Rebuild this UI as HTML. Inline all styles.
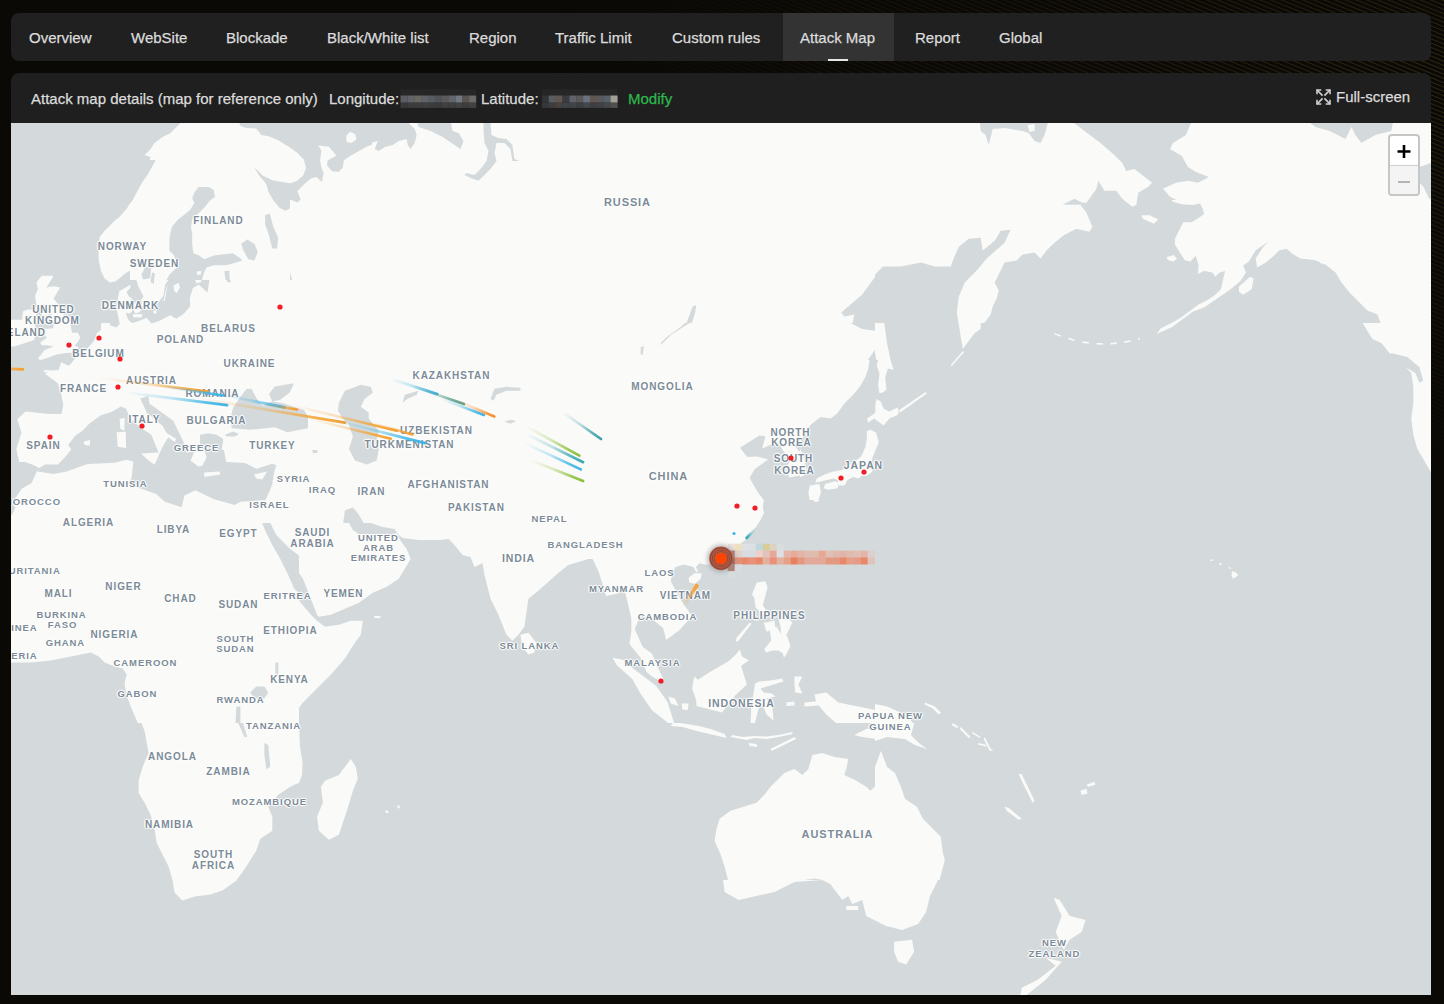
<!DOCTYPE html>
<html><head><meta charset="utf-8">
<style>
*{box-sizing:border-box;margin:0;padding:0}
html,body{width:1444px;height:1004px;overflow:hidden;background:#0b0906;font-family:"Liberation Sans",sans-serif}
#bg{position:absolute;left:0;top:0;width:1444px;height:1004px;background:#0b0906}
#stripes{position:absolute;left:0;top:0;width:1444px;height:1004px;background:repeating-linear-gradient(22deg,rgba(0,0,0,0) 0px,rgba(0,0,0,0) 2px,rgba(105,95,40,0.38) 3px,rgba(0,0,0,0) 4px);-webkit-mask-image:radial-gradient(ellipse 900px 420px at 1444px 75px,#000 0%,rgba(0,0,0,0.5) 40%,rgba(0,0,0,0) 100%);mask-image:radial-gradient(ellipse 900px 420px at 1444px 75px,#000 0%,rgba(0,0,0,0.5) 40%,rgba(0,0,0,0) 100%)}
.bar{position:absolute;left:11px;top:13px;width:1420px;height:48px;background:#202020;border-radius:8px}
.tab{position:absolute;top:29px;font-size:15px;color:#dcdcdc;white-space:nowrap;line-height:17px;-webkit-text-stroke:0.25px #dcdcdc}
.act{position:absolute;left:783px;top:13px;width:111px;height:48px;background:#333333}
.uline{position:absolute;left:828px;top:59px;width:20px;height:2px;background:#e6e6e6}
.panel{position:absolute;left:11px;top:73px;width:1420px;height:922px;background:#1f1f1f;border-radius:8px 8px 0 0;overflow:hidden}
.htxt{position:absolute;top:90px;font-size:15px;color:#dcdcdc;white-space:nowrap;line-height:17px;-webkit-text-stroke:0.25px currentColor}
#map{position:absolute;left:11px;top:123px;width:1420px;height:872px;background:#d4dadc;overflow:hidden}
#map svg{position:absolute;left:0;top:0}
.lb{position:absolute;transform:translate(-50%,-50%);font-weight:bold;color:#7c8b97;letter-spacing:0.9px;white-space:nowrap;line-height:1;
 text-shadow:0 0 2px #fff,0 0 2px #fff,1px 0 1px #fff,-1px 0 1px #fff,0 1px 1px #fff,0 -1px 1px #fff}
.zoom{position:absolute;left:1388px;top:134px;width:32px;height:62px;border:2px solid #c6c6c6;border-radius:4px;background:#fff;overflow:hidden}
.zoom .mi{position:absolute;left:0;top:29px;width:28px;height:29px;background:#f4f4f4;border-top:1px solid #cfcfcf}
</style></head><body>
<div id="bg"></div><div id="stripes"></div>
<div class="bar"></div>
<div class="act"></div>
<div class="uline"></div>
<div class="tab" style="left:29px">Overview</div>
<div class="tab" style="left:131px">WebSite</div>
<div class="tab" style="left:226px">Blockade</div>
<div class="tab" style="left:327px">Black/White list</div>
<div class="tab" style="left:469px">Region</div>
<div class="tab" style="left:555px">Traffic Limit</div>
<div class="tab" style="left:672px">Custom rules</div>
<div class="tab" style="left:800px">Attack Map</div>
<div class="tab" style="left:915px">Report</div>
<div class="tab" style="left:999px">Global</div>
<div class="panel"></div>
<div class="htxt" style="left:31px">Attack map details (map for reference only)</div>
<div class="htxt" style="left:329px">Longitude:</div>
<div class="htxt" style="left:481px">Latitude:</div>
<div class="htxt" style="left:628px;color:#2db84d">Modify</div>
<div class="htxt" style="left:1336px;top:88px">Full-screen</div>
<svg width="1444" height="123" style="position:absolute;left:0;top:0"><rect x="400.5" y="89.2" width="75.5" height="6.3" fill="#262626"/><rect x="400.5" y="95.5" width="7.1" height="7.2" fill="#5a5e62"/><rect x="407.4" y="95.5" width="7.1" height="7.2" fill="#606468"/><rect x="414.2" y="95.5" width="7.1" height="7.2" fill="#6a6660"/><rect x="421.1" y="95.5" width="7.1" height="7.2" fill="#5e6266"/><rect x="428.0" y="95.5" width="7.1" height="7.2" fill="#585c60"/><rect x="434.8" y="95.5" width="7.1" height="7.2" fill="#50545a"/><rect x="441.7" y="95.5" width="7.1" height="7.2" fill="#5a5a5a"/><rect x="448.5" y="95.5" width="7.1" height="7.2" fill="#62666a"/><rect x="455.4" y="95.5" width="7.1" height="7.2" fill="#707880"/><rect x="462.3" y="95.5" width="7.1" height="7.2" fill="#5a5450"/><rect x="469.1" y="95.5" width="7.1" height="7.2" fill="#6a6a6a"/><rect x="400.5" y="102.7" width="7.1" height="5.2" fill="#383838"/><rect x="407.4" y="102.7" width="7.1" height="5.2" fill="#3a3c3e"/><rect x="414.2" y="102.7" width="7.1" height="5.2" fill="#3c3c3c"/><rect x="421.1" y="102.7" width="7.1" height="5.2" fill="#403e3c"/><rect x="428.0" y="102.7" width="7.1" height="5.2" fill="#3c3c3c"/><rect x="434.8" y="102.7" width="7.1" height="5.2" fill="#383a3c"/><rect x="441.7" y="102.7" width="7.1" height="5.2" fill="#3e4042"/><rect x="448.5" y="102.7" width="7.1" height="5.2" fill="#3c3e40"/><rect x="455.4" y="102.7" width="7.1" height="5.2" fill="#404244"/><rect x="462.3" y="102.7" width="7.1" height="5.2" fill="#3e3c3a"/><rect x="469.1" y="102.7" width="7.1" height="5.2" fill="#424242"/><rect x="541.9" y="89.2" width="75.5" height="6.3" fill="#262626"/><rect x="541.9" y="95.5" width="7.1" height="7.2" fill="#303438"/><rect x="548.8" y="95.5" width="7.1" height="7.2" fill="#5a5c60"/><rect x="555.6" y="95.5" width="7.1" height="7.2" fill="#605850"/><rect x="562.5" y="95.5" width="7.1" height="7.2" fill="#383c40"/><rect x="569.4" y="95.5" width="7.1" height="7.2" fill="#62606a"/><rect x="576.2" y="95.5" width="7.1" height="7.2" fill="#5a5858"/><rect x="583.1" y="95.5" width="7.1" height="7.2" fill="#6a7080"/><rect x="589.9" y="95.5" width="7.1" height="7.2" fill="#605850"/><rect x="596.8" y="95.5" width="7.1" height="7.2" fill="#585a5c"/><rect x="603.7" y="95.5" width="7.1" height="7.2" fill="#58606a"/><rect x="610.5" y="95.5" width="7.1" height="7.2" fill="#a0a098"/><rect x="541.9" y="102.7" width="7.1" height="5.2" fill="#34383c"/><rect x="548.8" y="102.7" width="7.1" height="5.2" fill="#403c3a"/><rect x="555.6" y="102.7" width="7.1" height="5.2" fill="#48423e"/><rect x="562.5" y="102.7" width="7.1" height="5.2" fill="#3e4448"/><rect x="569.4" y="102.7" width="7.1" height="5.2" fill="#404448"/><rect x="576.2" y="102.7" width="7.1" height="5.2" fill="#3c4040"/><rect x="583.1" y="102.7" width="7.1" height="5.2" fill="#40484c"/><rect x="589.9" y="102.7" width="7.1" height="5.2" fill="#403e3c"/><rect x="596.8" y="102.7" width="7.1" height="5.2" fill="#3e4246"/><rect x="603.7" y="102.7" width="7.1" height="5.2" fill="#444848"/><rect x="610.5" y="102.7" width="7.1" height="5.2" fill="#50504e"/>
<g stroke="#d0d0d0" stroke-width="1.6" fill="none" stroke-linecap="square">
<path d="M1317.5,90.5 L1322,95"/><path d="M1317,90 h3.5 M1317,90 v3.5"/>
<path d="M1329.5,90.5 L1325,95"/><path d="M1330,90 h-3.5 M1330,90 v3.5"/>
<path d="M1317.5,103.5 L1322,99"/><path d="M1317,104 h3.5 M1317,104 v-3.5"/>
<path d="M1329.5,103.5 L1325,99"/><path d="M1330,104 h-3.5 M1330,104 v-3.5"/>
</g></svg>
<div id="map">
<svg width="1420" height="872" viewBox="0 0 1420 872"><path fill="#fafaf8" fill-rule="evenodd" d="M119.1,295.3 129.2,304.5 140.4,311.7 147.6,329.6 130.0,330.6 137.6,337.6 143.6,341.8 148.2,331.6 147.7,330.0 148.2,331.2 151.6,323.7 157.2,314.3 163.7,319.1 165.3,316.1 155.4,309.7 151.6,302.9 136.0,290.0 129.2,275.4 137.4,273.0 138.4,280.4 162.3,297.7 173.1,320.3 175.5,329.6 183.5,328.6 179.5,337.6 187.3,343.4 191.3,342.8 195.7,334.4 193.2,327.0 189.0,327.0 189.0,311.7 197.3,310.2 205.6,311.8 212.3,316.0 210.7,327.0 212.9,327.0 215.2,339.0 234.0,340.0 245.7,345.8 261.3,340.8 265.3,342.2 263.1,349.6 261.3,361.0 258.5,368.3 254.5,376.9 242.9,378.1 229.4,378.7 223.6,382.1 202.4,375.9 184.5,367.3 173.5,372.5 170.7,384.3 153.8,378.7 145.2,370.9 116.7,361.0 120.5,355.0 122.3,338.4 115.3,336.8 103.5,339.8 76.6,341.0 55.6,348.4 42.5,351.0 26.3,348.6 27.1,347.0 26.3,347.6 20.5,360.2 11.0,365.5 3.6,375.9 3.0,383.1 4.6,384.5 1.8,390.3 0.0,392.7 0.0,539.6 19.9,539.6 39.9,537.6 79.8,529.6 87.8,533.6 93.7,539.6 103.7,543.6 111.7,545.6 115.7,551.6 113.7,559.6 114.7,569.5 119.7,583.5 126.8,600.0 130.4,600.0 133.6,608.0 137.6,629.9 131.6,643.9 127.6,657.8 127.6,669.8 133.6,679.8 139.6,691.7 143.6,705.7 145.6,719.7 157.6,743.6 161.6,757.6 163.5,769.5 171.5,777.5 183.5,773.5 199.4,771.5 211.4,767.5 225.4,757.6 235.3,743.6 245.3,727.6 249.3,715.7 261.3,707.7 261.3,693.7 257.3,683.8 267.3,671.8 279.2,663.8 288.0,659.8 291.0,651.9 291.6,639.9 289.0,623.9 288.0,600.0 288.0,584.8 292.0,579.5 319.9,551.6 333.9,535.6 343.8,519.7 349.8,511.7 351.8,497.7 339.9,497.7 327.9,501.7 313.9,503.7 306.0,497.7 300.0,491.7 288.0,477.8 288.0,470.0 283.2,465.8 277.2,451.9 269.3,435.9 261.3,421.9 255.3,410.0 251.1,400.0 259.3,400.0 265.3,412.0 279.2,425.9 288.0,432.4 288.0,449.9 292.0,455.8 306.0,491.7 307.9,493.7 319.9,491.7 347.8,479.8 361.8,469.8 375.8,463.8 387.7,455.8 399.7,435.9 395.7,425.9 389.7,418.0 385.7,410.0 379.7,412.0 371.8,411.0 347.8,411.0 341.9,407.0 338.0,400.0 332.2,400.0 333.9,387.5 341.9,384.5 347.8,391.5 352.7,400.0 359.8,400.0 371.8,404.0 383.7,406.0 387.7,412.0 391.7,415.0 407.7,417.0 427.6,417.0 437.6,416.0 443.6,421.9 451.5,431.9 459.5,433.9 463.5,443.9 471.5,439.9 473.5,451.9 479.5,475.8 487.4,491.7 495.4,511.7 501.4,517.7 507.4,511.7 513.4,503.7 517.4,475.8 527.3,467.8 547.3,449.9 557.3,441.9 576.0,436.5 576.0,435.9 581.6,435.9 587.8,449.1 595.1,473.0 606.5,470.4 611.1,467.8 614.5,470.4 620.3,495.1 620.3,508.9 618.5,520.9 629.9,535.2 635.6,549.0 641.0,553.6 650.2,558.4 653.2,557.8 646.8,544.4 641.0,530.8 631.6,523.7 623.7,505.9 631.0,489.2 633.2,493.3 642.4,497.1 652.2,505.3 655.2,516.9 668.5,506.9 677.4,497.0 682.0,497.0 680.1,491.7 669.3,476.2 659.8,458.3 661.0,451.1 664.5,443.9 672.9,441.5 682.5,443.9 684.9,448.7 687.2,448.7 684.9,443.9 688.4,440.3 694.4,441.5 702.8,441.5 711.2,439.2 720.7,427.2 735.1,416.4 744.6,404.5 749.4,397.3 753.0,390.1 751.8,384.2 752.8,377.0 747.2,370.1 738.6,355.0 743.7,345.9 757.3,336.4 746.0,333.4 736.3,334.1 728.9,324.7 748.4,312.5 754.5,313.3 751.1,325.4 767.0,318.7 771.6,326.9 779.5,336.0 775.4,345.6 778.3,354.4 789.0,352.4 789.0,354.3 793.5,352.3 795.6,346.2 792.6,333.8 789.0,325.3 789.0,329.3 784.3,323.7 784.9,318.9 789.0,311.3 789.0,319.6 797.6,304.2 800.6,301.1 809.6,294.0 819.7,295.6 826.6,290.0 833.6,280.2 842.0,271.9 849.0,263.5 854.5,253.7 857.3,245.4 858.5,237.0 856.8,237.0 864.0,226.8 864.0,229.9 865.4,237.0 867.1,237.0 865.7,242.6 868.5,250.9 867.1,262.1 868.5,270.5 872.7,269.1 875.5,266.3 874.1,255.1 876.8,245.4 882.4,246.8 879.6,237.0 876.0,219.9 873.2,200.0 864.0,200.0 864.0,207.7 851.2,206.0 839.3,200.0 841.6,200.0 843.3,191.5 833.3,193.5 830.3,189.5 851.2,171.5 864.0,154.1 864.0,151.6 872.0,143.6 889.9,143.6 909.9,139.6 923.8,143.6 939.8,143.6 941.8,137.6 947.8,123.7 957.7,115.7 969.7,114.7 971.7,127.6 983.7,117.7 989.7,107.7 999.6,106.7 993.6,119.7 975.7,135.6 965.7,147.6 953.8,159.6 947.8,173.5 945.8,189.5 951.8,225.9 963.7,210.0 969.7,206.0 969.7,200.0 973.2,200.0 979.7,191.5 981.7,183.5 985.7,175.5 987.7,167.5 983.7,159.6 993.6,139.6 1005.6,137.6 1011.6,131.6 1023.6,129.6 1029.5,135.6 1035.5,127.6 1043.5,119.7 1053.5,111.7 1065.4,105.7 1078.4,108.7 1081.4,103.7 1075.4,89.8 1069.4,81.8 1051.5,81.8 1063.4,75.8 1071.4,79.8 1075.4,79.8 1085.4,65.8 1087.4,57.8 1093.4,67.8 1105.3,67.8 1111.3,75.8 1121.3,83.8 1125.3,81.8 1127.3,69.8 1137.2,63.8 1141.2,59.8 1123.3,45.9 1115.3,47.9 1111.3,39.9 1103.3,31.9 1089.4,19.9 1063.0,0.0 1036.9,0.0 1033.5,12.0 1029.5,19.9 1023.6,18.0 1017.6,10.0 1011.6,8.0 993.6,5.0 981.7,6.0 977.7,21.9 974.7,12.0 969.7,8.0 968.9,0.0 479.6,0.0 480.5,12.0 487.4,15.0 495.4,16.0 501.4,21.9 503.4,35.9 508.4,37.9 501.4,37.9 499.4,25.9 493.4,19.9 485.5,19.9 483.5,29.9 485.5,37.9 479.5,45.9 467.5,57.8 461.5,55.8 453.5,51.9 455.5,49.9 463.5,51.9 469.5,45.9 475.5,37.9 477.5,27.9 473.5,19.9 472.5,8.0 472.5,0.0 440.0,0.0 441.6,8.0 447.6,10.0 452.5,18.0 449.6,25.9 431.6,14.0 419.6,8.0 407.7,4.0 406.3,0.0 397.7,0.0 403.7,6.0 405.7,12.0 403.7,19.9 399.7,25.9 396.7,21.9 395.7,16.0 387.7,18.0 381.7,21.9 373.8,23.9 367.8,27.9 363.8,25.9 366.8,18.0 361.0,19.6 361.0,21.8 355.5,23.8 337.9,33.8 332.9,37.6 331.7,45.1 327.3,48.9 321.0,48.3 316.0,42.6 316.6,37.6 325.4,32.6 317.9,23.8 307.2,22.6 310.4,27.6 309.1,37.6 310.4,45.1 312.6,50.1 311.0,58.9 305.3,53.9 300.3,55.2 292.8,61.4 286.3,68.3 289.7,76.5 286.5,79.6 279.0,76.4 279.0,85.5 274.4,87.8 268.4,84.8 262.4,77.6 257.6,69.3 255.3,60.9 248.1,52.5 243.3,44.2 251.7,52.5 261.2,57.3 279.0,60.2 285.3,58.3 292.2,52.6 295.1,45.1 292.8,36.4 286.5,30.1 277.8,23.8 267.7,17.5 257.7,13.2 250.2,11.9 245.2,5.6 235.2,5.0 229.5,3.1 228.2,0.0 169.5,0.0 159.6,10.0 151.6,14.0 143.6,19.9 139.6,25.9 133.6,31.9 139.6,33.9 138.6,37.0 144.7,37.0 142.9,40.6 136.9,51.3 131.0,59.7 121.4,77.6 119.0,80.8 119.0,80.2 115.7,85.8 108.7,93.7 104.5,97.0 93.7,107.7 88.8,113.7 87.4,123.7 87.8,137.6 90.0,148.1 93.7,155.6 99.0,159.5 104.8,158.2 114.5,150.2 119.0,147.5 119.0,157.0 125.4,157.0 127.0,162.7 132.5,173.2 130.1,177.1 132.1,186.4 140.1,186.5 147.8,178.7 152.4,173.1 154.1,161.8 157.3,157.0 155.5,157.0 158.4,151.7 166.8,143.4 163.2,132.6 158.4,127.8 158.4,114.7 160.8,103.9 166.8,96.8 178.8,87.2 183.5,80.0 181.2,75.2 183.5,69.3 187.7,63.9 197.9,63.9 202.7,66.9 203.9,74.1 199.1,77.6 193.1,84.8 181.2,96.8 180.0,103.9 181.2,111.1 181.2,120.7 182.3,130.2 188.3,132.6 193.1,136.2 202.7,132.6 221.8,130.2 229.0,135.0 231.4,137.4 224.2,139.8 214.6,142.2 202.7,142.2 195.5,144.6 193.1,149.4 191.0,157.0 198.4,157.0 196.5,169.4 187.9,161.8 181.9,165.1 178.8,175.0 179.2,183.3 173.1,190.6 165.4,195.7 159.3,192.3 148.1,197.9 140.6,200.5 135.5,194.7 128.0,197.9 121.0,199.9 117.1,196.4 115.1,191.0 115.2,189.7 118.9,190.6 121.3,187.9 120.1,184.5 115.8,185.0 117.3,178.7 121.6,176.0 117.8,173.5 115.5,168.9 119.3,164.8 119.6,161.8 108.2,168.2 105.3,184.8 108.8,200.8 105.4,204.5 99.0,202.3 99.0,200.0 90.0,200.0 90.0,206.9 86.3,209.6 82.6,218.5 75.8,226.1 69.8,228.2 59.9,240.7 57.3,242.7 50.2,239.3 47.7,247.1 40.6,247.6 34.0,247.1 31.8,249.0 37.2,249.0 33.7,250.5 46.9,260.2 49.9,269.8 52.3,281.4 50.5,290.9 37.7,291.1 14.6,288.6 6.4,295.9 10.4,309.7 5.4,326.2 8.2,339.0 14.4,339.0 23.5,342.6 28.1,345.1 34.3,341.4 46.9,341.4 53.5,334.8 60.2,326.6 57.2,321.7 64.0,312.9 71.4,307.7 78.2,300.7 89.8,292.3 100.5,289.0 109.9,283.6 115.1,285.8ZM302.0,330.6 301.2,327.0 305.9,327.0 306.9,329.6ZM279.0,148.7 281.2,157.6 279.0,156.8ZM218.2,147.6 218.7,157.0 219.6,157.0 219.8,159.0 216.5,159.6 215.6,157.0 214.5,157.0 213.4,148.2ZM232.0,600.0 236.3,614.0 233.4,614.0 227.2,600.0 224.5,600.0 225.4,583.5 229.4,583.5 229.4,600.0ZM680.8,200.0 678.4,200.0 659.8,212.0 649.8,221.9 649.8,219.9 655.8,214.0 669.7,204.0 673.7,200.0 675.5,200.0 681.7,183.5 685.3,181.9 683.7,191.5ZM343.8,337.6 337.9,325.7 341.9,313.7 337.9,301.7 331.9,295.7 326.9,287.8 327.9,279.8 333.9,267.8 349.8,261.8 359.8,263.8 361.8,269.8 353.8,275.8 349.8,283.8 357.8,289.8 357.8,295.7 367.8,307.7 365.8,315.7 367.8,325.7 365.8,337.6 355.8,341.6ZM509.4,267.8 495.4,267.8 485.5,271.8 482.5,277.8 479.5,275.8 483.5,265.8 495.4,263.8 509.4,264.8ZM505.4,298.1 499.4,300.7 493.4,298.7 499.4,296.7ZM391.7,279.8 393.7,271.8 407.7,267.8 405.7,271.8 396.7,275.8ZM632.8,222.9 631.8,231.9 629.5,230.9 629.9,223.9ZM239.3,569.5 245.3,563.5 253.3,563.5 257.3,569.5 253.3,575.5 243.3,575.5ZM264.3,539.6 267.3,539.6 267.3,551.6 264.3,551.6ZM257.3,621.9 259.3,643.9 255.3,645.9 253.3,631.9 253.3,619.9ZM144.0,150.5 143.1,157.0 142.8,160.9 139.4,159.0 141.1,149.4ZM230.2,120.7 236.1,116.5 243.3,120.7 246.9,129.0 243.3,137.4 237.3,136.2 232.5,127.8ZM261.2,125.4 257.6,111.1 254.1,101.5 254.1,92.0 258.8,90.8 262.4,103.9 267.2,114.7 266.0,125.4ZM132.1,156.5 130.4,151.7 134.5,143.4 140.0,144.6 139.3,155.3ZM258.0,279.4 261.3,278.6 272.1,280.2 292.9,286.9 297.0,293.5 297.0,305.2 276.3,309.3 263.8,304.3 238.9,306.8 220.6,305.2 219.7,293.5 222.2,284.4 228.9,274.4 235.5,266.1 240.5,265.7 245.5,275.3 250.5,281.9 253.0,282.7ZM258.0,271.1 263.8,263.6 282.9,260.3 278.8,269.4 268.8,276.9 261.3,278.6ZM213.9,311.8 222.2,308.5 228.1,311.0 223.9,313.5 215.6,313.5ZM1016.6,2.0 1018.6,9.0 1023.6,8.0 1023.6,1.0ZM1370.4,219.9 1378.4,229.9 1379.8,231.1 1380.3,229.9 1396.3,233.9 1408.3,243.9 1412.3,257.8 1408.3,259.8 1404.3,249.9 1395.0,244.5 1400.3,249.9 1402.3,263.8 1402.3,279.8 1400.3,295.7 1402.3,311.7 1406.3,325.7 1420.2,349.6 1425.0,350.2 1425.0,75.8 1418.2,75.8 1412.3,63.8 1404.3,55.8 1408.3,43.9 1420.2,39.9 1425.0,39.9 1425.0,0.0 1381.9,0.0 1380.3,8.0 1364.4,12.0 1350.4,19.9 1344.4,12.0 1340.5,4.0 1334.5,16.0 1318.5,8.0 1304.6,4.0 1299.2,0.0 1180.0,0.0 1174.9,12.0 1162.0,19.9 1159.0,25.9 1170.9,32.9 1176.9,43.9 1184.9,48.9 1197.9,53.9 1186.9,59.8 1176.9,57.8 1164.9,59.8 1152.0,65.8 1159.0,73.8 1165.4,77.0 1160.7,77.0 1161.1,78.4 1170.8,81.2 1182.0,81.9 1189.0,80.5 1191.7,85.4 1193.1,90.9 1187.6,95.1 1180.6,99.3 1172.2,99.3 1163.9,116.0 1163.9,121.6 1173.6,137.0 1179.2,138.4 1184.8,132.8 1187.6,142.5 1186.9,150.9 1193.1,148.1 1201.5,149.5 1204.3,153.7 1208.5,149.5 1214.1,148.1 1209.9,166.2 1204.3,171.8 1195.9,177.4 1187.6,181.6 1170.8,194.1 1161.1,199.7 1149.9,205.3 1145.7,210.9 1161.1,203.9 1182.0,188.6 1193.1,184.4 1219.6,166.2 1229.4,157.9 1235.0,149.5 1232.2,142.5 1237.8,138.4 1244.7,127.2 1257.3,118.8 1251.7,124.4 1244.7,135.6 1246.1,143.9 1244.7,145.3 1254.5,139.7 1262.9,132.8 1268.4,127.2 1275.4,125.8 1282.4,131.4 1289.4,135.6 1303.3,137.0 1309.0,139.2 1309.0,140.0 1314.5,141.6 1324.5,149.6 1330.5,159.6 1338.5,169.5 1356.4,187.5 1366.4,191.5 1369.6,200.0 1351.6,200.0 1361.4,216.0ZM113.7,294.9 108.7,295.7 109.3,305.7 113.3,307.7ZM115.1,325.1 114.7,308.7 105.7,309.3 106.7,323.7ZM72.4,318.7 73.8,322.1 78.8,322.5 79.2,316.9ZM209.0,348.4 193.1,349.6 193.5,354.0 209.0,351.6ZM251.3,356.4 256.1,348.4 242.9,351.6 245.3,355.6ZM939.8,241.9 940.8,242.9 952.8,229.5 951.8,227.9ZM1049.9,212.2 1043.5,210.0 1043.5,211.6 1049.9,213.8ZM1063.8,216.6 1057.5,214.8 1057.5,216.4 1063.8,218.1ZM1077.8,219.1 1071.4,218.3 1071.4,219.9 1077.8,220.7ZM1091.8,220.1 1085.4,219.9 1085.4,221.5 1091.8,221.7ZM1105.7,219.3 1099.3,219.9 1099.3,221.5 1105.7,220.9ZM1119.7,217.2 1113.3,218.3 1113.3,219.9 1119.7,218.7ZM1127.3,215.4 1127.3,217.0 1129.0,216.4 1129.0,214.8ZM523.3,529.6 525.3,519.7 517.4,509.7 509.4,511.7 511.4,523.7 517.4,531.6ZM368.8,495.3 369.8,493.3 362.8,492.7 363.4,494.9ZM645.2,562.9 620.9,544.6 612.1,536.8 601.5,534.8 605.9,542.2 621.3,556.0 630.0,571.5 641.0,587.3 657.2,600.0 661.8,600.0 659.8,603.0 671.7,604.0 685.7,608.0 715.6,615.0 713.6,611.0 699.7,606.0 687.7,603.0 669.7,600.0 663.1,600.0 656.6,578.9ZM738.0,537.6 731.0,533.6 728.8,526.4 724.6,531.8 717.8,538.0 697.3,550.0 687.1,556.8 683.1,553.8 681.1,565.7 685.1,576.7 685.5,582.9 711.2,589.5 723.8,572.7 735.8,561.4 730.0,542.8ZM748.8,497.0 745.3,497.0 745.5,497.7ZM775.4,493.7 769.0,495.4 769.0,497.0 767.8,497.0 769.5,503.7 770.2,511.3 765.5,503.7 764.3,504.1 763.5,497.7 752.7,499.7 755.5,508.7 758.8,507.6 760.3,517.2 753.1,526.4 755.5,529.6 761.5,527.6 767.5,527.6 771.9,530.6 772.9,534.6 775.4,531.6 779.4,522.9 776.4,513.7 775.0,511.9 775.4,511.7 781.4,499.7ZM770.3,512.1 770.3,512.5 770.0,512.8ZM740.5,500.7 738.5,499.7 725.6,514.7 724.6,518.9 727.6,517.7ZM771.1,555.6 759.5,557.6 748.1,558.6 744.1,560.6 742.5,571.1 740.5,579.5 739.6,600.0 744.0,600.0 747.5,585.5 751.5,581.5 755.5,591.5 762.5,597.5 761.5,585.5 755.5,575.5 764.5,573.5 760.5,570.5 752.5,569.5 749.5,565.5 772.5,558.6ZM787.4,561.6 791.4,553.6 783.4,553.6 783.4,561.6 784.4,569.5 791.4,570.5ZM864.0,618.0 876.0,614.0 893.9,616.0 903.9,621.9 915.9,625.9 907.9,619.9 899.9,612.0 903.3,600.0 902.0,600.0 893.9,591.5 876.0,583.5 864.0,580.9 864.0,587.1 827.3,579.5 815.3,569.5 803.4,571.5 805.1,578.5 793.4,579.5 793.4,583.5 807.4,582.5 806.6,581.0 815.3,591.5 825.0,600.0 864.0,600.0 864.0,604.4 855.2,606.0 843.3,612.0 851.2,614.0 864.0,615.7ZM663.8,575.5 657.2,573.5 659.8,580.5 667.5,583.1ZM676.7,587.1 677.7,580.5 670.7,580.5 671.3,586.5ZM775.4,583.1 783.4,582.5 783.4,578.5 775.4,579.5ZM927.8,591.5 929.8,589.5 923.8,583.5 913.9,579.5 913.9,581.5 921.8,585.5ZM1222.2,455.8 1227.2,452.5 1225.5,449.7 1221.1,448.0 1220.5,452.5ZM1220.0,444.7 1217.2,444.1 1218.3,445.8 1220.5,445.5ZM1210.0,440.3 1207.8,440.3 1208.9,441.9 1211.1,441.7ZM1201.7,436.4 1199.2,436.4 1199.5,438.1 1202.0,437.8ZM339.9,635.9 327.9,651.9 313.9,657.8 309.9,663.8 311.9,679.8 306.0,693.7 307.9,707.7 317.9,716.7 327.9,711.7 335.9,687.8 341.9,667.8 346.8,655.8 344.8,643.9ZM376.8,687.4 374.2,687.8 375.2,690.1 377.8,690.1ZM388.7,682.4 386.3,682.8 386.7,685.2 388.7,685.2ZM915.1,788.9 919.0,773.0 927.0,757.0 928.5,757.0 933.8,737.6 931.8,729.6 929.8,713.7 911.9,695.7 905.9,683.8 893.9,675.8 889.9,663.8 883.9,649.9 876.0,643.9 870.0,627.9 864.0,643.9 864.0,663.8 859.2,667.8 855.2,663.8 845.3,657.8 833.3,651.9 835.3,645.9 837.3,635.9 823.3,633.9 811.3,629.9 801.4,631.9 797.4,645.9 791.4,651.9 783.4,645.9 773.5,649.9 759.5,663.8 753.5,671.8 745.5,679.8 719.6,687.8 708.6,695.7 705.6,705.7 703.6,717.7 709.6,731.6 713.6,743.6 717.0,757.0 712.1,757.0 713.6,769.0 727.6,776.9 763.5,769.0 783.4,759.0 811.3,757.0 819.3,761.0 831.3,776.9 837.3,773.0 841.3,780.9 851.2,776.9 855.2,792.9 875.2,802.9 891.1,806.9 907.1,800.9ZM793.3,757.0 803.4,755.6 812.0,757.0 811.3,757.0ZM781.4,611.0 781.4,609.0 767.5,612.0 755.5,613.6 743.5,613.0 731.6,614.0 721.6,612.0 719.6,614.0 735.6,617.0 743.5,615.0 755.5,616.0 767.5,614.0ZM737.6,619.9 738.5,622.9 746.5,623.9 745.5,620.9ZM785.4,616.0 783.4,614.0 759.5,625.9 760.5,627.9ZM995.6,687.8 1007.6,696.7 1010.6,695.7 997.6,684.8 993.6,683.8ZM1011.6,659.8 1021.6,679.8 1023.6,677.8 1010.6,650.9 1007.6,650.9ZM1076.4,670.8 1075.4,665.8 1069.4,667.8 1070.4,671.8ZM1084.4,661.8 1083.4,658.8 1075.4,661.8 1077.4,663.8ZM940.8,602.0 945.8,605.0 947.8,604.0 941.8,600.0ZM949.8,604.0 948.8,606.0 957.7,615.0 959.7,614.0ZM969.7,614.0 961.7,609.0 960.7,610.0 968.7,615.0ZM974.7,623.5 975.7,621.9 967.7,619.9 966.7,621.5ZM978.7,627.9 982.7,626.9 979.7,625.9 973.7,614.0 972.7,616.0 975.7,621.9ZM344.2,11.3 339.2,8.8 335.4,12.5 335.4,18.8 340.4,20.1 345.5,16.3ZM124.5,190.6 128.9,189.0 131.0,183.9 126.7,179.0 121.8,181.2 121.8,185.6ZM130.6,194.5 131.1,191.0 121.8,191.2 122.3,194.3ZM167.7,159.8 162.3,162.4 163.3,167.9 165.5,170.2 169.0,164.6ZM156.7,160.6 154.4,169.0 152.4,178.0 153.8,178.0ZM190.1,157.0 184.2,157.0 185.4,160.4 190.1,159.0ZM142.8,190.6 145.3,190.6 145.3,186.9 142.5,187.9ZM33.5,227.0 26.8,235.7 29.7,236.9 38.6,234.3 45.4,231.6 54.9,229.9 60.7,229.8 67.0,226.2 67.5,224.1 63.3,222.7 66.7,219.2 69.3,214.2 66.7,209.7 61.0,209.7 58.8,198.6 54.9,194.7 51.2,190.0 47.1,181.1 42.5,175.5 49.2,164.5 42.7,163.3 35.4,164.4 41.7,154.5 42.1,152.7 30.9,152.8 25.4,159.2 26.9,166.1 24.0,172.9 26.3,187.0 33.1,180.8 33.0,185.7 29.9,190.2 31.7,193.6 41.0,190.6 38.6,194.7 42.8,199.1 42.2,205.2 33.0,206.1 32.2,211.0 36.1,214.8 29.2,219.6 30.9,222.2 36.8,222.2 42.8,223.5ZM23.1,217.1 25.2,209.5 24.9,205.6 23.5,199.6 28.0,196.0 25.7,193.4 23.9,187.6 17.4,186.2 12.1,188.3 11.0,196.7 0.0,196.7 0.0,223.5 3.5,223.5ZM809.9,369.5 808.5,361.1 798.8,362.5 797.4,369.5 798.6,377.0 802.5,377.0 803.5,378.7 807.2,378.7 808.2,377.0 807.4,377.0ZM864.3,290.0 855.9,295.6 857.3,299.7 862.9,295.6 872.7,302.5 878.2,295.6 885.2,292.8 888.0,290.0 886.6,284.4 878.2,288.6 872.7,285.8 869.9,278.8 865.7,276.0 864.3,281.6ZM823.9,358.3 814.1,361.1 812.7,365.3 816.9,366.7 826.6,365.3 827.7,361.1 828.0,362.5 833.6,362.5 836.4,356.9 842.0,354.1 847.6,355.5 850.4,352.7 855.9,352.7 861.5,348.6 860.1,343.0 861.5,334.6 867.8,319.3 865.0,309.5 859.4,306.7 855.9,308.1 855.9,315.1 854.5,323.5 850.4,333.2 837.8,343.0 830.8,347.2 822.5,348.6 814.1,351.3 805.7,355.5 804.3,359.7 822.5,355.5 826.6,356.9 827.3,359.5ZM915.9,270.5 914.5,269.1 888.0,287.2 889.4,289.3ZM835.3,786.9 847.2,786.9 847.2,782.9 835.3,782.9ZM883.1,818.8 883.1,828.8 887.1,838.8 895.1,841.6 903.1,828.8 901.1,816.8ZM1052.7,826.8 1058.7,816.8 1070.6,808.9 1074.6,796.9 1058.7,792.9 1048.7,776.9 1042.7,775.0 1050.7,792.9 1044.7,808.9ZM1008.8,874.7 1014.8,872.7 1034.7,856.7 1050.7,838.8 1034.7,834.8 1044.7,842.8 1026.7,856.7 1010.8,864.7ZM1162.5,138.4 1166.0,135.6 1162.5,132.1 1155.5,134.2 1156.9,137.0ZM1131.8,95.8 1142.9,100.7 1147.1,96.5 1138.8,92.3 1130.4,92.3ZM1242.6,155.8 1239.2,153.7 1228.0,163.5 1228.0,169.0 1232.2,171.8 1240.6,166.2ZM189.5,151.7 190.7,148.2 185.9,148.2 185.9,151.7ZM678.3,459.5 683.7,460.7 689.6,455.9 690.8,450.5 683.7,449.9 677.7,454.7ZM751.8,482.2 756.6,464.3 754.2,458.3 745.8,459.5 741.0,471.4 743.4,475.0 744.6,484.6 751.8,491.7 756.6,489.4Z"/></svg>
<div class="lb" style="left:616.45px;top:79px;font-size:11.0px">RUSSIA</div><div class="lb" style="left:651.45px;top:264px;font-size:10.0px">MONGOLIA</div><div class="lb" style="left:440.45px;top:253px;font-size:10.0px">KAZAKHSTAN</div><div class="lb" style="left:657.45px;top:353px;font-size:11.0px">CHINA</div><div class="lb" style="left:507.45px;top:435px;font-size:10.5px">INDIA</div><div class="lb" style="left:538.45px;top:396px;font-size:9.5px">NEPAL</div><div class="lb" style="left:574.45px;top:422px;font-size:9.5px">BANGLADESH</div><div class="lb" style="left:605.45px;top:466px;font-size:9.5px">MYANMAR</div><div class="lb" style="left:648.45px;top:450px;font-size:9.5px">LAOS</div><div class="lb" style="left:674.45px;top:473px;font-size:10.0px">VIETNAM</div><div class="lb" style="left:656.45px;top:494px;font-size:9.5px">CAMBODIA</div><div class="lb" style="left:758.45px;top:493px;font-size:10.0px">PHILIPPINES</div><div class="lb" style="left:641.45px;top:540px;font-size:9.5px">MALAYSIA</div><div class="lb" style="left:730.45px;top:580px;font-size:10.5px">INDONESIA</div><div class="lb" style="left:879.45px;top:593px;font-size:9.5px">PAPUA NEW</div><div class="lb" style="left:879.45px;top:604px;font-size:9.5px">GUINEA</div><div class="lb" style="left:826.45px;top:711px;font-size:11.0px">AUSTRALIA</div><div class="lb" style="left:1043.45px;top:820px;font-size:9.5px">NEW</div><div class="lb" style="left:1043.45px;top:831px;font-size:9.5px">ZEALAND</div><div class="lb" style="left:518.45px;top:523px;font-size:9.5px">SRI LANKA</div><div class="lb" style="left:77.45px;top:400px;font-size:10.0px">ALGERIA</div><div class="lb" style="left:162.45px;top:407px;font-size:10.0px">LIBYA</div><div class="lb" style="left:227.45px;top:411px;font-size:10.0px">EGYPT</div><div class="lb" style="left:301.45px;top:410px;font-size:10.0px">SAUDI</div><div class="lb" style="left:301.45px;top:421px;font-size:10.0px">ARABIA</div><div class="lb" style="left:367.45px;top:415px;font-size:9.5px">UNITED</div><div class="lb" style="left:367.45px;top:425px;font-size:9.5px">ARAB</div><div class="lb" style="left:367.45px;top:435px;font-size:9.5px">EMIRATES</div><div class="lb" style="left:332.45px;top:471px;font-size:10.0px">YEMEN</div><div class="lb" style="left:227.45px;top:482px;font-size:10.0px">SUDAN</div><div class="lb" style="left:276.45px;top:473px;font-size:9.5px">ERITREA</div><div class="lb" style="left:279.45px;top:508px;font-size:10.0px">ETHIOPIA</div><div class="lb" style="left:224.45px;top:516px;font-size:9.5px">SOUTH</div><div class="lb" style="left:224.45px;top:526px;font-size:9.5px">SUDAN</div><div class="lb" style="left:278.45px;top:557px;font-size:10.0px">KENYA</div><div class="lb" style="left:262.45px;top:603px;font-size:9.5px">TANZANIA</div><div class="lb" style="left:229.45px;top:577px;font-size:9.5px">RWANDA</div><div class="lb" style="left:161.45px;top:634px;font-size:10.0px">ANGOLA</div><div class="lb" style="left:217.45px;top:649px;font-size:10.0px">ZAMBIA</div><div class="lb" style="left:258.45px;top:679px;font-size:9.5px">MOZAMBIQUE</div><div class="lb" style="left:158.45px;top:702px;font-size:10.0px">NAMIBIA</div><div class="lb" style="left:202.45px;top:732px;font-size:10.0px">SOUTH</div><div class="lb" style="left:202.45px;top:743px;font-size:10.0px">AFRICA</div><div class="lb" style="left:169.45px;top:476px;font-size:10.0px">CHAD</div><div class="lb" style="left:112.45px;top:464px;font-size:10.0px">NIGER</div><div class="lb" style="left:47.45px;top:471px;font-size:10.0px">MALI</div><div class="lb" style="left:15.45px;top:448px;font-size:9.5px">MAURITANIA</div><div class="lb" style="left:50.45px;top:492px;font-size:9.5px">BURKINA</div><div class="lb" style="left:51.45px;top:502px;font-size:9.5px">FASO</div><div class="lb" style="left:5.45px;top:505px;font-size:9.5px">GUINEA</div><div class="lb" style="left:4.45px;top:533px;font-size:9.5px">LIBERIA</div><div class="lb" style="left:54.45px;top:520px;font-size:9.5px">GHANA</div><div class="lb" style="left:103.45px;top:512px;font-size:10.0px">NIGERIA</div><div class="lb" style="left:134.45px;top:540px;font-size:9.5px">CAMEROON</div><div class="lb" style="left:126.45px;top:571px;font-size:9.5px">GABON</div><div class="lb" style="left:114.45px;top:361px;font-size:9.5px">TUNISIA</div><div class="lb" style="left:21.45px;top:379px;font-size:9.5px">MOROCCO</div><div class="lb" style="left:32.45px;top:323px;font-size:10.0px">SPAIN</div><div class="lb" style="left:72.45px;top:266px;font-size:10.0px">FRANCE</div><div class="lb" style="left:133.45px;top:297px;font-size:10.0px">ITALY</div><div class="lb" style="left:185.45px;top:325px;font-size:9.5px">GREECE</div><div class="lb" style="left:261.45px;top:323px;font-size:10.0px">TURKEY</div><div class="lb" style="left:282.45px;top:356px;font-size:9.5px">SYRIA</div><div class="lb" style="left:258.45px;top:382px;font-size:9.5px">ISRAEL</div><div class="lb" style="left:311.45px;top:367px;font-size:9.5px">IRAQ</div><div class="lb" style="left:360.45px;top:369px;font-size:10.0px">IRAN</div><div class="lb" style="left:437.45px;top:362px;font-size:10.0px">AFGHANISTAN</div><div class="lb" style="left:465.45px;top:385px;font-size:10.0px">PAKISTAN</div><div class="lb" style="left:425.45px;top:308px;font-size:10.0px">UZBEKISTAN</div><div class="lb" style="left:398.45px;top:322px;font-size:10.0px">TURKMENISTAN</div><div class="lb" style="left:205.45px;top:298px;font-size:10.0px">BULGARIA</div><div class="lb" style="left:201.45px;top:271px;font-size:10.0px">ROMANIA</div><div class="lb" style="left:140.45px;top:258px;font-size:10.0px">AUSTRIA</div><div class="lb" style="left:87.45px;top:231px;font-size:10.0px">BELGIUM</div><div class="lb" style="left:238.45px;top:241px;font-size:10.0px">UKRAINE</div><div class="lb" style="left:169.45px;top:217px;font-size:10.0px">POLAND</div><div class="lb" style="left:217.45px;top:206px;font-size:10.0px">BELARUS</div><div class="lb" style="left:119.45px;top:183px;font-size:10.0px">DENMARK</div><div class="lb" style="left:42.45px;top:187px;font-size:10.0px">UNITED</div><div class="lb" style="left:41.45px;top:198px;font-size:10.0px">KINGDOM</div><div class="lb" style="left:9.45px;top:210px;font-size:10.0px">IRELAND</div><div class="lb" style="left:111.45px;top:124px;font-size:10.0px">NORWAY</div><div class="lb" style="left:143.45px;top:141px;font-size:10.0px">SWEDEN</div><div class="lb" style="left:207.45px;top:98px;font-size:10.0px">FINLAND</div><div class="lb" style="left:779.45px;top:310px;font-size:10.0px">NORTH</div><div class="lb" style="left:780.45px;top:320px;font-size:10.0px">KOREA</div><div class="lb" style="left:782.45px;top:336px;font-size:10.0px">SOUTH</div><div class="lb" style="left:783.45px;top:348px;font-size:10.0px">KOREA</div><div class="lb" style="left:852.45px;top:342px;font-size:10.5px">JAPAN</div>
<svg width="1420" height="872" viewBox="0 0 1420 872"><defs><linearGradient id="g0" gradientUnits="userSpaceOnUse" x1="-31" y1="245" x2="12" y2="246.3"><stop offset="0" stop-color="#f5a030" stop-opacity="0"/><stop offset="0.45" stop-color="#f5a030" stop-opacity="0.3"/><stop offset="0.8" stop-color="#f5a030" stop-opacity="0.85"/><stop offset="1" stop-color="#f5a030" stop-opacity="1"/></linearGradient><linearGradient id="g1" gradientUnits="userSpaceOnUse" x1="89" y1="255" x2="197" y2="268.6"><stop offset="0" stop-color="#f5a030" stop-opacity="0"/><stop offset="0.45" stop-color="#f5a030" stop-opacity="0.3"/><stop offset="0.8" stop-color="#f5a030" stop-opacity="0.85"/><stop offset="1" stop-color="#f5a030" stop-opacity="1"/></linearGradient><linearGradient id="g2" gradientUnits="userSpaceOnUse" x1="149" y1="263" x2="212" y2="272.5"><stop offset="0" stop-color="#3db5e6" stop-opacity="0"/><stop offset="0.45" stop-color="#3db5e6" stop-opacity="0.3"/><stop offset="0.8" stop-color="#3db5e6" stop-opacity="0.85"/><stop offset="1" stop-color="#3db5e6" stop-opacity="1"/></linearGradient><linearGradient id="g3" gradientUnits="userSpaceOnUse" x1="114" y1="269.4" x2="216.1" y2="282.2"><stop offset="0" stop-color="#3db5e6" stop-opacity="0"/><stop offset="0.45" stop-color="#3db5e6" stop-opacity="0.3"/><stop offset="0.8" stop-color="#3db5e6" stop-opacity="0.85"/><stop offset="1" stop-color="#3db5e6" stop-opacity="1"/></linearGradient><linearGradient id="g4" gradientUnits="userSpaceOnUse" x1="212" y1="272" x2="273.5" y2="284.4"><stop offset="0" stop-color="#3db5e6" stop-opacity="0"/><stop offset="0.45" stop-color="#3db5e6" stop-opacity="0.3"/><stop offset="0.8" stop-color="#3db5e6" stop-opacity="0.85"/><stop offset="1" stop-color="#3db5e6" stop-opacity="1"/></linearGradient><linearGradient id="g5" gradientUnits="userSpaceOnUse" x1="251" y1="281" x2="286" y2="286.5"><stop offset="0" stop-color="#f59a30" stop-opacity="0"/><stop offset="0.45" stop-color="#f59a30" stop-opacity="0.3"/><stop offset="0.8" stop-color="#f59a30" stop-opacity="0.85"/><stop offset="1" stop-color="#f59a30" stop-opacity="1"/></linearGradient><linearGradient id="g6" gradientUnits="userSpaceOnUse" x1="185" y1="275" x2="333.9" y2="299.7"><stop offset="0" stop-color="#f5a030" stop-opacity="0"/><stop offset="0.45" stop-color="#f5a030" stop-opacity="0.3"/><stop offset="0.8" stop-color="#f5a030" stop-opacity="0.85"/><stop offset="1" stop-color="#f5a030" stop-opacity="1"/></linearGradient><linearGradient id="g7" gradientUnits="userSpaceOnUse" x1="280" y1="282" x2="385.7" y2="307.7"><stop offset="0" stop-color="#f5a030" stop-opacity="0"/><stop offset="0.45" stop-color="#f5a030" stop-opacity="0.3"/><stop offset="0.8" stop-color="#f5a030" stop-opacity="0.85"/><stop offset="1" stop-color="#f5a030" stop-opacity="1"/></linearGradient><linearGradient id="g8" gradientUnits="userSpaceOnUse" x1="298" y1="295.7" x2="379.7" y2="315.7"><stop offset="0" stop-color="#f5a030" stop-opacity="0"/><stop offset="0.45" stop-color="#f5a030" stop-opacity="0.3"/><stop offset="0.8" stop-color="#f5a030" stop-opacity="0.85"/><stop offset="1" stop-color="#f5a030" stop-opacity="1"/></linearGradient><linearGradient id="g9" gradientUnits="userSpaceOnUse" x1="319" y1="296" x2="413.9" y2="320.1"><stop offset="0" stop-color="#3db5e6" stop-opacity="0"/><stop offset="0.45" stop-color="#3db5e6" stop-opacity="0.3"/><stop offset="0.8" stop-color="#3db5e6" stop-opacity="0.85"/><stop offset="1" stop-color="#3db5e6" stop-opacity="1"/></linearGradient><linearGradient id="g10" gradientUnits="userSpaceOnUse" x1="359.8" y1="299.7" x2="401.4" y2="311.5"><stop offset="0" stop-color="#f5a030" stop-opacity="0"/><stop offset="0.45" stop-color="#f5a030" stop-opacity="0.3"/><stop offset="0.8" stop-color="#f5a030" stop-opacity="0.85"/><stop offset="1" stop-color="#f5a030" stop-opacity="1"/></linearGradient><linearGradient id="g11" gradientUnits="userSpaceOnUse" x1="380.6" y1="256.1" x2="426.3" y2="271.1"><stop offset="0" stop-color="#3db5e6" stop-opacity="0"/><stop offset="0.45" stop-color="#3db5e6" stop-opacity="0.3"/><stop offset="0.8" stop-color="#3db5e6" stop-opacity="0.85"/><stop offset="1" stop-color="#3db5e6" stop-opacity="1"/></linearGradient><linearGradient id="g12" gradientUnits="userSpaceOnUse" x1="401" y1="263" x2="452.9" y2="281.1"><stop offset="0" stop-color="#5a9e8c" stop-opacity="0"/><stop offset="0.45" stop-color="#5a9e8c" stop-opacity="0.3"/><stop offset="0.8" stop-color="#5a9e8c" stop-opacity="0.85"/><stop offset="1" stop-color="#5a9e8c" stop-opacity="1"/></linearGradient><linearGradient id="g13" gradientUnits="userSpaceOnUse" x1="428.8" y1="275.3" x2="472.9" y2="291.9"><stop offset="0" stop-color="#3db5e6" stop-opacity="0"/><stop offset="0.45" stop-color="#3db5e6" stop-opacity="0.3"/><stop offset="0.8" stop-color="#3db5e6" stop-opacity="0.85"/><stop offset="1" stop-color="#3db5e6" stop-opacity="1"/></linearGradient><linearGradient id="g14" gradientUnits="userSpaceOnUse" x1="444" y1="277" x2="483.3" y2="293.5"><stop offset="0" stop-color="#f59030" stop-opacity="0"/><stop offset="0.45" stop-color="#f59030" stop-opacity="0.3"/><stop offset="0.8" stop-color="#f59030" stop-opacity="0.85"/><stop offset="1" stop-color="#f59030" stop-opacity="1"/></linearGradient><linearGradient id="g15" gradientUnits="userSpaceOnUse" x1="515.3" y1="303.5" x2="568.4" y2="332.6"><stop offset="0" stop-color="#8cc03c" stop-opacity="0"/><stop offset="0.45" stop-color="#8cc03c" stop-opacity="0.3"/><stop offset="0.8" stop-color="#8cc03c" stop-opacity="0.85"/><stop offset="1" stop-color="#8cc03c" stop-opacity="1"/></linearGradient><linearGradient id="g16" gradientUnits="userSpaceOnUse" x1="515.3" y1="311" x2="572.1" y2="339.2"><stop offset="0" stop-color="#3aa8b4" stop-opacity="0"/><stop offset="0.45" stop-color="#3aa8b4" stop-opacity="0.3"/><stop offset="0.8" stop-color="#3aa8b4" stop-opacity="0.85"/><stop offset="1" stop-color="#3aa8b4" stop-opacity="1"/></linearGradient><linearGradient id="g17" gradientUnits="userSpaceOnUse" x1="513.6" y1="320.1" x2="569.8" y2="346.4"><stop offset="0" stop-color="#3db5e6" stop-opacity="0"/><stop offset="0.45" stop-color="#3db5e6" stop-opacity="0.3"/><stop offset="0.8" stop-color="#3db5e6" stop-opacity="0.85"/><stop offset="1" stop-color="#3db5e6" stop-opacity="1"/></linearGradient><linearGradient id="g18" gradientUnits="userSpaceOnUse" x1="518.6" y1="336.7" x2="572.1" y2="358"><stop offset="0" stop-color="#8cc03c" stop-opacity="0"/><stop offset="0.45" stop-color="#8cc03c" stop-opacity="0.3"/><stop offset="0.8" stop-color="#8cc03c" stop-opacity="0.85"/><stop offset="1" stop-color="#8cc03c" stop-opacity="1"/></linearGradient><linearGradient id="g19" gradientUnits="userSpaceOnUse" x1="551.8" y1="289.4" x2="590" y2="316"><stop offset="0" stop-color="#3aa0a8" stop-opacity="0"/><stop offset="0.45" stop-color="#3aa0a8" stop-opacity="0.3"/><stop offset="0.8" stop-color="#3aa0a8" stop-opacity="0.85"/><stop offset="1" stop-color="#3aa0a8" stop-opacity="1"/></linearGradient><linearGradient id="g20" gradientUnits="userSpaceOnUse" x1="671.7" y1="483.79999999999995" x2="685.7" y2="462.79999999999995"><stop offset="0" stop-color="#f5a030" stop-opacity="0"/><stop offset="0.45" stop-color="#f5a030" stop-opacity="0.3"/><stop offset="0.8" stop-color="#f5a030" stop-opacity="0.85"/><stop offset="1" stop-color="#f5a030" stop-opacity="1"/></linearGradient><linearGradient id="g21" gradientUnits="userSpaceOnUse" x1="745" y1="405" x2="735.6" y2="415"><stop offset="0" stop-color="#3aa8b4" stop-opacity="0"/><stop offset="0.45" stop-color="#3aa8b4" stop-opacity="0.3"/><stop offset="0.8" stop-color="#3aa8b4" stop-opacity="0.85"/><stop offset="1" stop-color="#3aa8b4" stop-opacity="1"/></linearGradient></defs><line x1="-31" y1="245" x2="12" y2="246.3" stroke="url(#g0)" stroke-width="2.7" stroke-linecap="round"/><line x1="89" y1="255" x2="197" y2="268.6" stroke="url(#g1)" stroke-width="2.7" stroke-linecap="round"/><line x1="149" y1="263" x2="212" y2="272.5" stroke="url(#g2)" stroke-width="2.7" stroke-linecap="round"/><line x1="114" y1="269.4" x2="216.1" y2="282.2" stroke="url(#g3)" stroke-width="2.7" stroke-linecap="round"/><line x1="212" y1="272" x2="273.5" y2="284.4" stroke="url(#g4)" stroke-width="2.7" stroke-linecap="round"/><line x1="251" y1="281" x2="286" y2="286.5" stroke="url(#g5)" stroke-width="2.7" stroke-linecap="round"/><line x1="185" y1="275" x2="333.9" y2="299.7" stroke="url(#g6)" stroke-width="2.7" stroke-linecap="round"/><line x1="280" y1="282" x2="385.7" y2="307.7" stroke="url(#g7)" stroke-width="2.7" stroke-linecap="round"/><line x1="298" y1="295.7" x2="379.7" y2="315.7" stroke="url(#g8)" stroke-width="2.7" stroke-linecap="round"/><line x1="319" y1="296" x2="413.9" y2="320.1" stroke="url(#g9)" stroke-width="2.7" stroke-linecap="round"/><line x1="359.8" y1="299.7" x2="401.4" y2="311.5" stroke="url(#g10)" stroke-width="2.7" stroke-linecap="round"/><line x1="380.6" y1="256.1" x2="426.3" y2="271.1" stroke="url(#g11)" stroke-width="2.7" stroke-linecap="round"/><line x1="401" y1="263" x2="452.9" y2="281.1" stroke="url(#g12)" stroke-width="2.7" stroke-linecap="round"/><line x1="428.8" y1="275.3" x2="472.9" y2="291.9" stroke="url(#g13)" stroke-width="2.7" stroke-linecap="round"/><line x1="444" y1="277" x2="483.3" y2="293.5" stroke="url(#g14)" stroke-width="2.7" stroke-linecap="round"/><line x1="515.3" y1="303.5" x2="568.4" y2="332.6" stroke="url(#g15)" stroke-width="2.7" stroke-linecap="round"/><line x1="515.3" y1="311" x2="572.1" y2="339.2" stroke="url(#g16)" stroke-width="2.7" stroke-linecap="round"/><line x1="513.6" y1="320.1" x2="569.8" y2="346.4" stroke="url(#g17)" stroke-width="2.7" stroke-linecap="round"/><line x1="518.6" y1="336.7" x2="572.1" y2="358" stroke="url(#g18)" stroke-width="2.7" stroke-linecap="round"/><line x1="551.8" y1="289.4" x2="590" y2="316" stroke="url(#g19)" stroke-width="2.7" stroke-linecap="round"/><line x1="671.7" y1="483.79999999999995" x2="685.7" y2="462.79999999999995" stroke="url(#g20)" stroke-width="3.8" stroke-linecap="round"/><line x1="745" y1="405" x2="735.6" y2="415" stroke="url(#g21)" stroke-width="2.7" stroke-linecap="round"/><circle cx="58" cy="222" r="2.6" fill="#f21c24"/><circle cx="88" cy="215" r="2.6" fill="#f21c24"/><circle cx="109" cy="236" r="2.6" fill="#f21c24"/><circle cx="107" cy="264" r="2.6" fill="#f21c24"/><circle cx="131" cy="303" r="2.6" fill="#f21c24"/><circle cx="39" cy="314" r="2.6" fill="#f21c24"/><circle cx="269" cy="184" r="2.6" fill="#f21c24"/><circle cx="780" cy="335" r="2.6" fill="#f21c24"/><circle cx="853" cy="349" r="2.6" fill="#f21c24"/><circle cx="830" cy="355" r="2.6" fill="#f21c24"/><circle cx="744" cy="385" r="2.6" fill="#f21c24"/><circle cx="726" cy="383" r="2.6" fill="#f21c24"/><circle cx="650" cy="558" r="2.6" fill="#f21c24"/><rect x="56" y="220" width="4" height="4" fill="#f21c24"/><rect x="107" y="234" width="4" height="4" fill="#f21c24"/><circle cx="723" cy="410.5" r="1.6" fill="#3db5e6"/><rect x="716.7" y="420.7" width="7.2" height="7.1" fill="#ece4dc"/><rect x="723.7" y="420.7" width="7.2" height="7.1" fill="#f0e0c0"/><rect x="730.7" y="420.7" width="7.2" height="7.1" fill="#dde0e4"/><rect x="737.7" y="420.7" width="7.2" height="7.1" fill="#dde0e3"/><rect x="744.7" y="420.7" width="7.2" height="7.1" fill="#c0d8dc"/><rect x="751.7" y="420.7" width="7.2" height="7.1" fill="#d8cc98"/><rect x="758.7" y="420.7" width="7.2" height="7.1" fill="#dcd4c0"/><rect x="765.7" y="420.7" width="7.2" height="7.1" fill="#d8dcdc"/><rect x="716.7" y="427.6" width="7.2" height="7.1" fill="#b87060"/><rect x="723.7" y="427.6" width="7.2" height="7.1" fill="#e0d0c8"/><rect x="730.7" y="427.6" width="7.2" height="7.1" fill="#d8dce0"/><rect x="737.7" y="427.6" width="7.2" height="7.1" fill="#d8dce0"/><rect x="744.7" y="427.6" width="7.2" height="7.1" fill="#f0d0c8"/><rect x="751.7" y="427.6" width="7.2" height="7.1" fill="#e0c4bc"/><rect x="758.7" y="427.6" width="7.2" height="7.1" fill="#e8a898"/><rect x="765.7" y="427.6" width="7.2" height="7.1" fill="#dce0e4"/><rect x="772.7" y="427.6" width="7.2" height="7.1" fill="#e4b4a8"/><rect x="779.7" y="427.6" width="7.2" height="7.1" fill="#e8aa98"/><rect x="786.7" y="427.6" width="7.2" height="7.1" fill="#e4b4a8"/><rect x="793.7" y="427.6" width="7.2" height="7.1" fill="#e0bcb0"/><rect x="800.7" y="427.6" width="7.2" height="7.1" fill="#e0bcb0"/><rect x="807.7" y="427.6" width="7.2" height="7.1" fill="#e8a890"/><rect x="814.7" y="427.6" width="7.2" height="7.1" fill="#e0c0b4"/><rect x="821.7" y="427.6" width="7.2" height="7.1" fill="#e0b8ac"/><rect x="828.7" y="427.6" width="7.2" height="7.1" fill="#e0b4a8"/><rect x="835.7" y="427.6" width="7.2" height="7.1" fill="#e0bcb0"/><rect x="842.7" y="427.6" width="7.2" height="7.1" fill="#e0c0b4"/><rect x="849.7" y="427.6" width="7.2" height="7.1" fill="#e4b4a8"/><rect x="856.7" y="427.6" width="7.2" height="7.1" fill="#dcd0cc"/><rect x="716.7" y="434.4" width="7.2" height="7.1" fill="#a85038"/><rect x="723.7" y="434.4" width="7.2" height="7.1" fill="#e09078"/><rect x="730.7" y="434.4" width="7.2" height="7.1" fill="#e88868"/><rect x="737.7" y="434.4" width="7.2" height="7.1" fill="#e89078"/><rect x="744.7" y="434.4" width="7.2" height="7.1" fill="#e88868"/><rect x="751.7" y="434.4" width="7.2" height="7.1" fill="#e4b0a0"/><rect x="758.7" y="434.4" width="7.2" height="7.1" fill="#e89078"/><rect x="765.7" y="434.4" width="7.2" height="7.1" fill="#e4b0a0"/><rect x="772.7" y="434.4" width="7.2" height="7.1" fill="#e4a088"/><rect x="779.7" y="434.4" width="7.2" height="7.1" fill="#e88060"/><rect x="786.7" y="434.4" width="7.2" height="7.1" fill="#e49880"/><rect x="793.7" y="434.4" width="7.2" height="7.1" fill="#e4a898"/><rect x="800.7" y="434.4" width="7.2" height="7.1" fill="#e4a898"/><rect x="807.7" y="434.4" width="7.2" height="7.1" fill="#e4a898"/><rect x="814.7" y="434.4" width="7.2" height="7.1" fill="#e49880"/><rect x="821.7" y="434.4" width="7.2" height="7.1" fill="#e49880"/><rect x="828.7" y="434.4" width="7.2" height="7.1" fill="#e88868"/><rect x="835.7" y="434.4" width="7.2" height="7.1" fill="#e4a088"/><rect x="842.7" y="434.4" width="7.2" height="7.1" fill="#e49c88"/><rect x="849.7" y="434.4" width="7.2" height="7.1" fill="#e88868"/><rect x="856.7" y="434.4" width="7.2" height="7.1" fill="#e0c4bc"/><rect x="716.7" y="441.3" width="7.2" height="7.1" fill="#b08070"/><rect x="723.7" y="441.3" width="7.2" height="7.1" fill="#d8dce0"/><rect x="716.7" y="448.1" width="7.2" height="7.1" fill="#d8dcdc"/><defs><filter id="mb" x="-50%" y="-50%" width="200%" height="200%"><feGaussianBlur stdDeviation="2"/></filter></defs>
<circle cx="710" cy="435.4" r="14" fill="#8a9296" opacity="0.55" filter="url(#mb)"/>
<circle cx="710" cy="435.4" r="11.8" fill="#c8583c"/>
<circle cx="710" cy="435.4" r="10.6" fill="none" stroke="#7e4c40" stroke-width="1.1"/>
<circle cx="710" cy="435.4" r="8.6" fill="none" stroke="#7e4c40" stroke-width="1.0"/>
<circle cx="710" cy="435.4" r="6.8" fill="none" stroke="#8a4a3a" stroke-width="1.0"/>
<circle cx="710" cy="435.4" r="5.4" fill="#ff4400"/></svg>
</div>
<div class="zoom"><svg width="28" height="58" style="position:absolute;left:0;top:0"><path d="M14,9 v13 M7.5,15.5 h13" stroke="#000" stroke-width="2.6"/><path d="M8,45.5 h12" stroke="#b8b8b8" stroke-width="2"/></svg><div class="mi"><svg width="28" height="29"><path d="M8,16 h12" stroke="#b4b4b4" stroke-width="1.8"/></svg></div></div>
</body></html>
